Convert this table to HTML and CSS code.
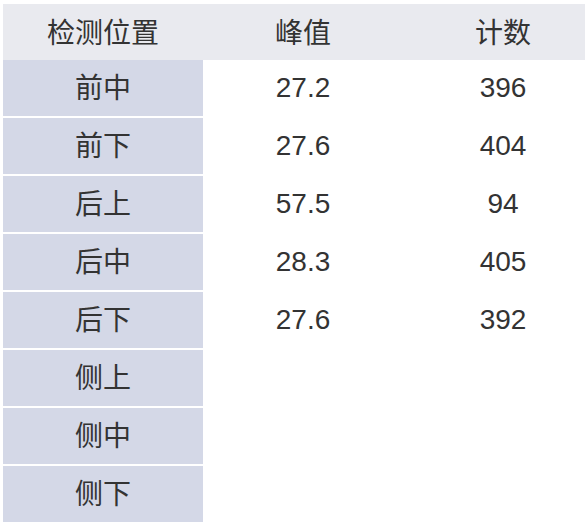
FILE: index.html
```html
<!DOCTYPE html>
<html lang="zh">
<head>
<meta charset="utf-8">
<link rel="stylesheet" href="styles.css">
</head>
<body>
<table class="grid">
  <thead>
    <tr><th class="pos">检测位置</th><th>峰值</th><th>计数</th></tr>
  </thead>
  <tbody>
    <tr><td class="pos">前中</td><td>27.2</td><td>396</td></tr>
    <tr><td class="pos">前下</td><td>27.6</td><td>404</td></tr>
    <tr><td class="pos">后上</td><td>57.5</td><td>94</td></tr>
    <tr><td class="pos">后中</td><td>28.3</td><td>405</td></tr>
    <tr><td class="pos">后下</td><td>27.6</td><td>392</td></tr>
    <tr><td class="pos">侧上</td><td></td><td></td></tr>
    <tr><td class="pos">侧中</td><td></td><td></td></tr>
    <tr><td class="pos">侧下</td><td></td><td></td></tr>
  </tbody>
</table>
</body>
</html>
```
FILE: styles.css
```css
html, body {
  margin: 0;
  padding: 0;
  background: #ffffff;
  overflow: hidden;
}
body {
  padding: 4px 0 0 3px;
  font-family: "Liberation Sans", "Noto Sans CJK SC", sans-serif;
  color: #333333;
}
.grid {
  border-collapse: separate;
  border-spacing: 0;
  width: 600px;
  table-layout: fixed;
}
.grid th, .grid td {
  width: 200px;
  padding: 0;
  text-align: center;
  vertical-align: middle;
  font-size: 28px;
  font-weight: normal;
  box-sizing: border-box;
}
.grid th {
  height: 56px;
  background: #e9eaef;
  padding-bottom: 3px;
}
.grid td {
  height: 58px;
  border-bottom: 2px solid #ffffff;
}
.grid td.pos {
  background: #d4d8e7;
  padding-bottom: 5px;
}
```
